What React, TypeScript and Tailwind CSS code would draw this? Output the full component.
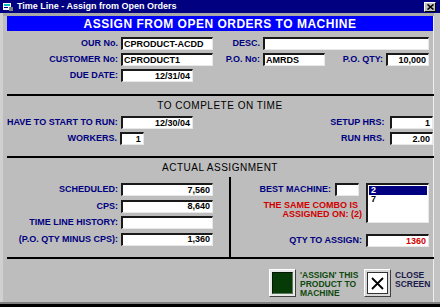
import React from "react";

const font = { fontFamily: '"Liberation Sans", Arial, sans-serif' };

function Input({ w, value = "", align = "right", color = "text-black", h = "h-[13px]" }: { w: string; value?: string; align?: "left" | "right"; color?: string; h?: string }) {
  return (
    <div
      className={`${w} ${h} bg-white border-t-2 border-l-2 border-t-[#1a1a1a] border-l-[#1a1a1a] border-b border-r border-b-[#e8e8e8] border-r-[#e8e8e8] flex items-center ${align === "right" ? "justify-end pr-[2px]" : "justify-start pl-[1px]"} text-[9px] font-bold leading-none ${color} overflow-hidden whitespace-nowrap`}
    >
      {value}
    </div>
  );
}

function Label({ w, children, className = "" }: { w: string; children: React.ReactNode; className?: string }) {
  return (
    <div className={`${w} text-right text-[9px] font-bold leading-none text-[#000080] whitespace-nowrap ${className}`}>{children}</div>
  );
}

export default function App() {
  return (
    <div className="w-[440px] h-[307px] bg-[#bdbdbd] flex flex-col overflow-hidden select-none" style={font}>
      {/* Title bar */}
      <div className="h-[13px] bg-[#000080] flex items-center pl-[3px] pr-[4px] shrink-0">
        <svg width="10" height="9" viewBox="0 0 10 9" className="shrink-0">
          <rect x="0" y="1" width="8" height="7" fill="#ffffff" />
          <rect x="1" y="2" width="6" height="2" fill="#00c0c0" />
          <rect x="1" y="5" width="4" height="1" fill="#000080" />
          <rect x="6" y="5" width="4" height="4" fill="#808080" />
        </svg>
        <span className="ml-[4px] text-white text-[9px] font-bold leading-none whitespace-nowrap">Time Line - Assign from Open Orders</span>
        <div className="flex-1" />
        <div className="w-[12px] h-[10px] bg-[#c0c0c0] border border-t-white border-l-white border-b-black border-r-black flex items-center justify-center">
          <svg width="7" height="6" viewBox="0 0 7 6">
            <path d="M0.5 0.5 L6.5 5.5 M6.5 0.5 L0.5 5.5" stroke="#000" strokeWidth="1.6" />
          </svg>
        </div>
      </div>

      {/* Body */}
      <div className="flex-1 flex flex-col border-l-[3px] border-l-[#d0d0d0] border-r-[6px] border-r-[#c4c4c4]">
        <div className="h-[3px] bg-[#a8a8a8]" />
        <div className="flex-1 flex flex-col pl-[4px] pr-[0px] border-r border-r-[#eeeeee] ml-[0px]">
          {/* Banner */}
          <div className="h-[15px] w-[426px] bg-[#0000ff] text-white text-[12px] font-bold leading-none flex items-center justify-center tracking-[0.5px]">
            ASSIGN FROM OPEN ORDERS TO MACHINE
          </div>

          {/* Section 1 */}
          <div className="flex flex-col gap-[3px] pt-[6px]">
            <div className="flex items-center h-[13px]">
              <Label w="w-[111px]">OUR No.</Label>
              <div className="w-[3px]" />
              <Input w="w-[92px]" value="CPRODUCT-ACDD" align="left" />
              <Label w="w-[47px]">DESC.</Label>
              <div className="w-[3px]" />
              <Input w="w-[166px]" />
            </div>
            <div className="flex items-center h-[13px]">
              <Label w="w-[111px]">CUSTOMER No:</Label>
              <div className="w-[3px]" />
              <Input w="w-[92px]" value="CPRODUCT1" align="left" />
              <Label w="w-[47px]">P.O. No:</Label>
              <div className="w-[3px]" />
              <Input w="w-[62px]" value="AMRDS" align="left" />
              <Label w="w-[58px]">P.O. QTY:</Label>
              <div className="w-[3px]" />
              <Input w="w-[43px]" value="10,000" />
            </div>
            <div className="flex items-center h-[13px]">
              <Label w="w-[111px]">DUE DATE:</Label>
              <div className="w-[3px]" />
              <Input w="w-[72px]" value="12/31/04" />
            </div>
          </div>

          <div className="mt-[12px] h-[2px] w-[427px] bg-black" />

          {/* Section 2 */}
          <div className="h-[20px] flex items-center justify-center text-[10px] leading-none text-black tracking-[0.5px]">TO COMPLETE ON TIME</div>
          <div className="flex flex-col gap-[3px]">
            <div className="flex items-center h-[13px]">
              <Label w="w-[111px]">HAVE TO START TO RUN:</Label>
              <div className="w-[3px]" />
              <Input w="w-[73px]" value="12/30/04" />
              <Label w="w-[194px]">SETUP HRS:</Label>
              <div className="w-[6px]" />
              <Input w="w-[43px]" value="1" />
            </div>
            <div className="flex items-center h-[13px]">
              <Label w="w-[111px]">WORKERS.</Label>
              <div className="w-[3px]" />
              <Input w="w-[24px]" value="1" />
              <Label w="w-[243px]">RUN HRS.</Label>
              <div className="w-[6px]" />
              <Input w="w-[43px]" value="2.00" />
            </div>
          </div>

          <div className="mt-[11px] h-[2px] w-[427px] bg-black" />

          {/* Section 3 */}
          <div className="h-[19px] flex items-center justify-center text-[10px] leading-none text-black tracking-[0.5px]">ACTUAL ASSIGNMENT</div>
          <div className="flex h-[80px]">
            <div className="w-[222px] flex flex-col gap-[3.5px] pt-[6px]">
              <div className="flex items-center h-[13px]">
                <Label w="w-[111px]">SCHEDULED:</Label>
                <div className="w-[3px]" />
                <Input w="w-[92px]" value="7,560" />
              </div>
              <div className="flex items-center h-[13px]">
                <Label w="w-[111px]">CPS:</Label>
                <div className="w-[3px]" />
                <Input w="w-[92px]" value="8,640" />
              </div>
              <div className="flex items-center h-[13px]">
                <Label w="w-[111px]">TIME LINE HISTORY:</Label>
                <div className="w-[3px]" />
                <Input w="w-[92px]" />
              </div>
              <div className="flex items-center h-[13px]">
                <Label w="w-[111px]">(P.O. QTY MINUS CPS):</Label>
                <div className="w-[3px]" />
                <Input w="w-[92px]" value="1,360" />
              </div>
            </div>
            <div className="w-[2px] bg-black mt-[0px]" />
            <div className="flex-1 flex flex-col pt-[6px]">
              <div className="flex">
                <div className="w-[135px] flex flex-col">
                  <div className="flex items-center h-[13px]">
                    <Label w="w-[100px]">BEST MACHINE:</Label>
                    <div className="w-[4px]" />
                    <Input w="w-[24px]" />
                  </div>
                  <div className="mt-[5px] w-[131px] text-right text-[9px] font-bold leading-[9px] text-[#d00000] whitespace-nowrap">
                    <div className="pr-[4px]">THE SAME COMBO IS</div>
                    <div>ASSIGNED ON: (2)</div>
                  </div>
                </div>
                <div className="w-[63px] h-[40px] bg-white border-t-2 border-l-2 border-t-[#1a1a1a] border-l-[#1a1a1a] border-b border-r border-b-[#e8e8e8] border-r-[#e8e8e8] flex flex-col pt-[1px] px-[1px]">
                  <div className="h-[9px] bg-[#000080] text-white text-[9px] font-bold leading-none pl-[2px] flex items-center">2</div>
                  <div className="h-[9px] text-black text-[9px] font-bold leading-none pl-[2px] flex items-center">7</div>
                </div>
              </div>
              <div className="flex items-center h-[13px] mt-[11px]">
                <Label w="w-[131px]">QTY TO ASSIGN:</Label>
                <div className="w-[4px]" />
                <Input w="w-[63px]" value="1360" color="text-[#d00000]" />
              </div>
            </div>
          </div>

          <div className="h-[2px] w-[427px] bg-black" />

          {/* Buttons */}
          <div className="flex items-start pt-[10px] pl-[262px]">
            <div className="w-[27px] h-[28px] bg-[#e8e8e8] border border-t-white border-l-white border-b-[#404040] border-r-[#404040] p-[2px]">
              <div className="w-full h-full bg-[#063a06] border border-t-[#001800] border-l-[#001800] border-b-[#5a7a5a] border-r-[#5a7a5a]" />
            </div>
            <div className="ml-[4px] w-[64px] text-[8.5px] font-bold leading-[9px] text-[#0e4a0e] pt-[2px] whitespace-nowrap">
              <div>'ASSIGN' THIS</div>
              <div>PRODUCT TO</div>
              <div>MACHINE</div>
            </div>
            <div className="w-[27px] h-[28px] bg-[#d8d8d8] border border-t-white border-l-white border-b-[#404040] border-r-[#404040] p-[2px]">
              <div className="w-full h-full bg-white border border-[#303030] flex items-center justify-center">
                <svg width="13" height="13" viewBox="0 0 13 13">
                  <path d="M1 1 L12 12 M12 1 L1 12" stroke="#000" strokeWidth="1.8" />
                </svg>
              </div>
            </div>
            <div className="ml-[4px] text-[8.5px] font-bold leading-[9px] text-[#1a1a4a] pt-[2px] whitespace-nowrap">
              <div>CLOSE</div>
              <div>SCREEN</div>
            </div>
          </div>
        </div>
        <div className="h-[2px] bg-[#808080] -ml-[3px] -mr-[6px]" />
      </div>
      <div className="h-[3px] bg-black shrink-0" />
    </div>
  );
}
